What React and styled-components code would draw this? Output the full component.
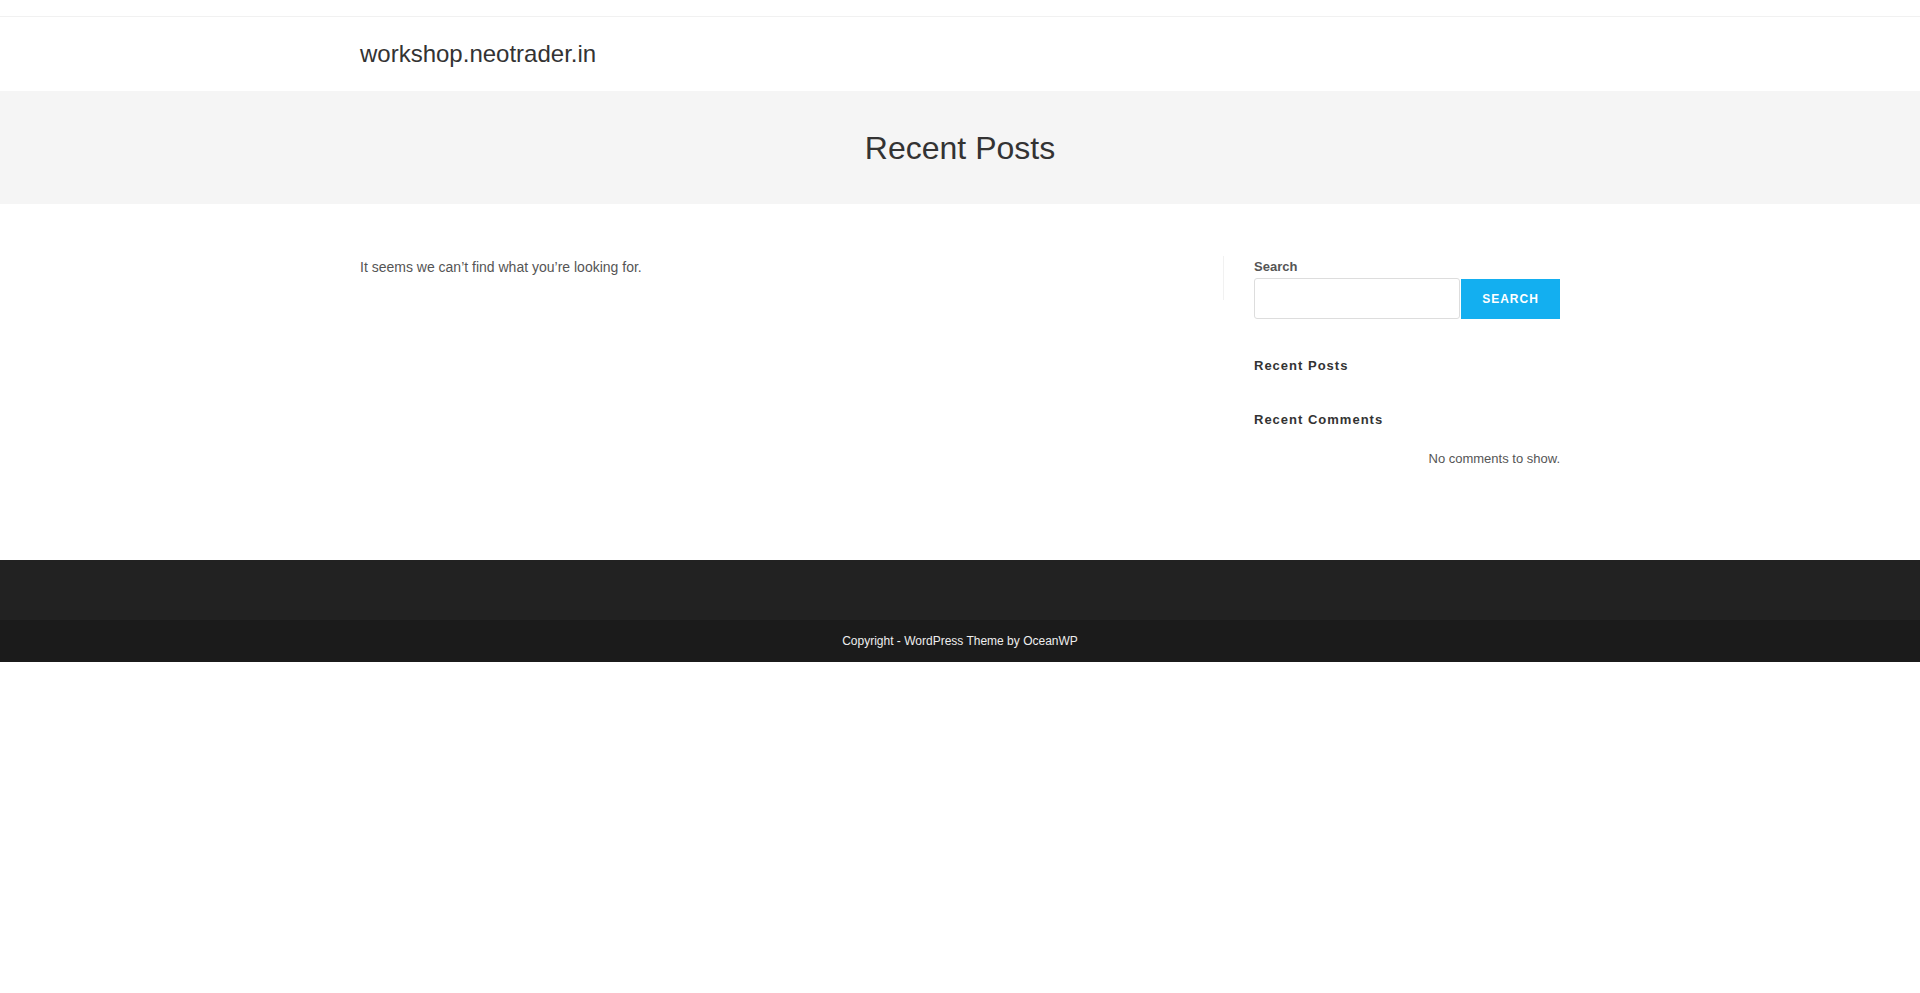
import React from 'react'
import styled, { createGlobalStyle } from 'styled-components'

const GlobalStyle = createGlobalStyle`
  * { box-sizing: border-box; }
  body {
    margin: 0;
    background: #fff;
    font-family: "Liberation Sans", Arial, sans-serif;
    font-size: 14px;
    line-height: 1.8;
    color: #555;
  }
`

const Container = styled.div`
  width: 1200px;
  margin: 0 auto;
`

const TopBar = styled.div`
  height: 17px;
  border-bottom: 1px solid #f1f1f1;
`

const Header = styled.header`
  height: 74px;
  background: #fff;
`

const HeaderInner = styled(Container)`
  height: 100%;
  display: flex;
  align-items: center;
`

const Logo = styled.a`
  font-size: 24px;
  line-height: 1;
  color: #333;
  text-decoration: none;
`

const PageHeader = styled.div`
  background: #f5f5f5;
  padding: 35px 0 33px;
`

const PageTitle = styled.h1`
  margin: 0;
  font-size: 32px;
  line-height: 1.4;
  font-weight: 400;
  color: #333;
  text-align: center;
`

const Main = styled(Container)`
  display: flex;
  padding: 50px 0;
`

const Primary = styled.div`
  width: 72%;
  padding-right: 30px;
`

const Notice = styled.p`
  margin: 1px 0 0;
  font-size: 14px;
  line-height: 1.8;
  color: #555;
`

const Sidebar = styled.aside`
  position: relative;
  width: 28%;
  padding-left: 30px;

  &::before {
    content: '';
    position: absolute;
    left: -1px;
    top: 2px;
    width: 1px;
    height: 44px;
    background: #f1f1f1;
  }
`

const Widget = styled.div`
  margin-bottom: 40px;
`

const SearchLabel = styled.label`
  display: block;
  font-size: 13px;
  font-weight: 700;
  line-height: 25px;
  color: #555;
`

const SearchRow = styled.form`
  display: flex;
  gap: 1px;
  margin: 0;
`

const SearchInput = styled.input`
  flex: 1;
  min-width: 0;
  height: 41px;
  margin-top: -1px;
  border: 1px solid #ddd;
  border-radius: 3px;
  background: #fff;
  padding: 6px 12px;
  font-family: inherit;
  font-size: 14px;
  outline: none;
`

const SearchButton = styled.button`
  width: 99px;
  height: 40px;
  border: 0;
  background: #13aff0;
  color: #fff;
  font-family: inherit;
  font-size: 12px;
  font-weight: 700;
  letter-spacing: 1px;
  text-transform: uppercase;
  cursor: pointer;
`

const WidgetTitle = styled.h4`
  margin: 0 0 ${p => p.$gap || 0}px;
  font-size: 13px;
  line-height: 14px;
  font-weight: 700;
  letter-spacing: 1px;
  color: #333;
`

const WidgetText = styled.div`
  font-size: 13px;
  line-height: 23px;
  color: #555;
  text-align: right;
`

const FooterWidgets = styled.div`
  height: 60px;
  background: #222;
`

const FooterBottom = styled.div`
  background: #1b1b1b;
  padding: 11px 0 10px;
  font-size: 12px;
  line-height: 21px;
  color: #eee;
  text-align: center;
`

export default function App() {
  return (
    <>
      <GlobalStyle />
      <TopBar />
      <Header>
        <HeaderInner>
          <Logo href="#">workshop.neotrader.in</Logo>
        </HeaderInner>
      </Header>
      <PageHeader>
        <PageTitle>Recent Posts</PageTitle>
      </PageHeader>
      <Main>
        <Primary>
          <Notice>It seems we can’t find what you’re looking for.</Notice>
        </Primary>
        <Sidebar>
          <Widget>
            <SearchLabel htmlFor="s">Search</SearchLabel>
            <SearchRow onSubmit={e => e.preventDefault()}>
              <SearchInput id="s" type="search" />
              <SearchButton type="submit">Search</SearchButton>
            </SearchRow>
          </Widget>
          <Widget>
            <WidgetTitle>Recent Posts</WidgetTitle>
          </Widget>
          <Widget>
            <WidgetTitle $gap={20}>Recent Comments</WidgetTitle>
            <WidgetText>No comments to show.</WidgetText>
          </Widget>
        </Sidebar>
      </Main>
      <FooterWidgets />
      <FooterBottom>Copyright - WordPress Theme by OceanWP</FooterBottom>
    </>
  )
}
